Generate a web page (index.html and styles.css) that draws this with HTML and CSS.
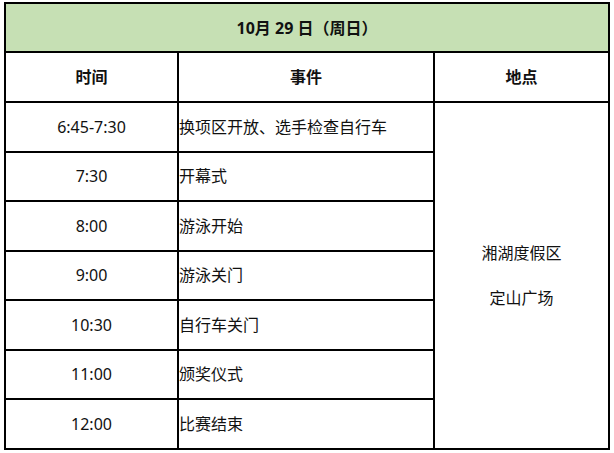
FILE: index.html
```html
<!DOCTYPE html>
<html lang="zh-CN">
<head>
<meta charset="utf-8">
<title>10月29日日程</title>
<link rel="stylesheet" href="styles.css">
</head>
<body>
<table class="schedule">
  <colgroup>
    <col class="c-time">
    <col class="c-event">
    <col class="c-place">
  </colgroup>
  <tr class="r-title">
    <td class="title" colspan="3">10月 29 日（周日）</td>
  </tr>
  <tr class="r-head">
    <td class="head">时间</td>
    <td class="head">事件</td>
    <td class="head">地点</td>
  </tr>
  <tr class="r-data">
    <td class="time">6:45-7:30</td>
    <td class="event">换项区开放、选手检查自行车</td>
    <td class="place" rowspan="7">
      <div class="place-line">湘湖度假区</div>
      <div class="place-line gap">定山广场</div>
    </td>
  </tr>
  <tr class="r-data">
    <td class="time">7:30</td>
    <td class="event">开幕式</td>
  </tr>
  <tr class="r-data">
    <td class="time">8:00</td>
    <td class="event">游泳开始</td>
  </tr>
  <tr class="r-data">
    <td class="time">9:00</td>
    <td class="event">游泳关门</td>
  </tr>
  <tr class="r-data">
    <td class="time">10:30</td>
    <td class="event">自行车关门</td>
  </tr>
  <tr class="r-data">
    <td class="time">11:00</td>
    <td class="event">颁奖仪式</td>
  </tr>
  <tr class="r-data r-last">
    <td class="time">12:00</td>
    <td class="event">比赛结束</td>
  </tr>
</table>
</body>
</html>
```
FILE: styles.css
```css
html, body {
  margin: 0;
  padding: 0;
  background: #ffffff;
}

body {
  padding: 2px 0 0 4px;
  font-family: "Noto Sans", "Noto Sans CJK SC", sans-serif;
  font-size: 16px;
  color: #111111;
}

.schedule {
  border-collapse: separate;
  border-spacing: 0;
  table-layout: fixed;
  width: 606px;
  border-top: 2px solid #000;
  border-left: 2px solid #000;
}

.c-time { width: 173px; }
.c-event { width: 256px; }
.c-place { width: 175px; }

.schedule td {
  border-right: 2px solid #000;
  border-bottom: 2px solid #000;
  padding: 0;
  line-height: 22px;
  box-sizing: border-box;
}

.r-title td { height: 49px; }
.r-head td { height: 50px; }
.r-data td { height: 49.5px; }

.title {
  background: #c6e0b4;
  text-align: center;
  font-weight: bold;
}

.head {
  text-align: center;
  font-weight: bold;
}

.time {
  text-align: center;
}

.event {
  text-align: left;
  padding-left: 1px;
  white-space: nowrap;
}

.schedule td.place {
  text-align: center;
  vertical-align: top;
  padding-top: 139px;
}

.place-line.gap {
  margin-top: 23px;
}
```
